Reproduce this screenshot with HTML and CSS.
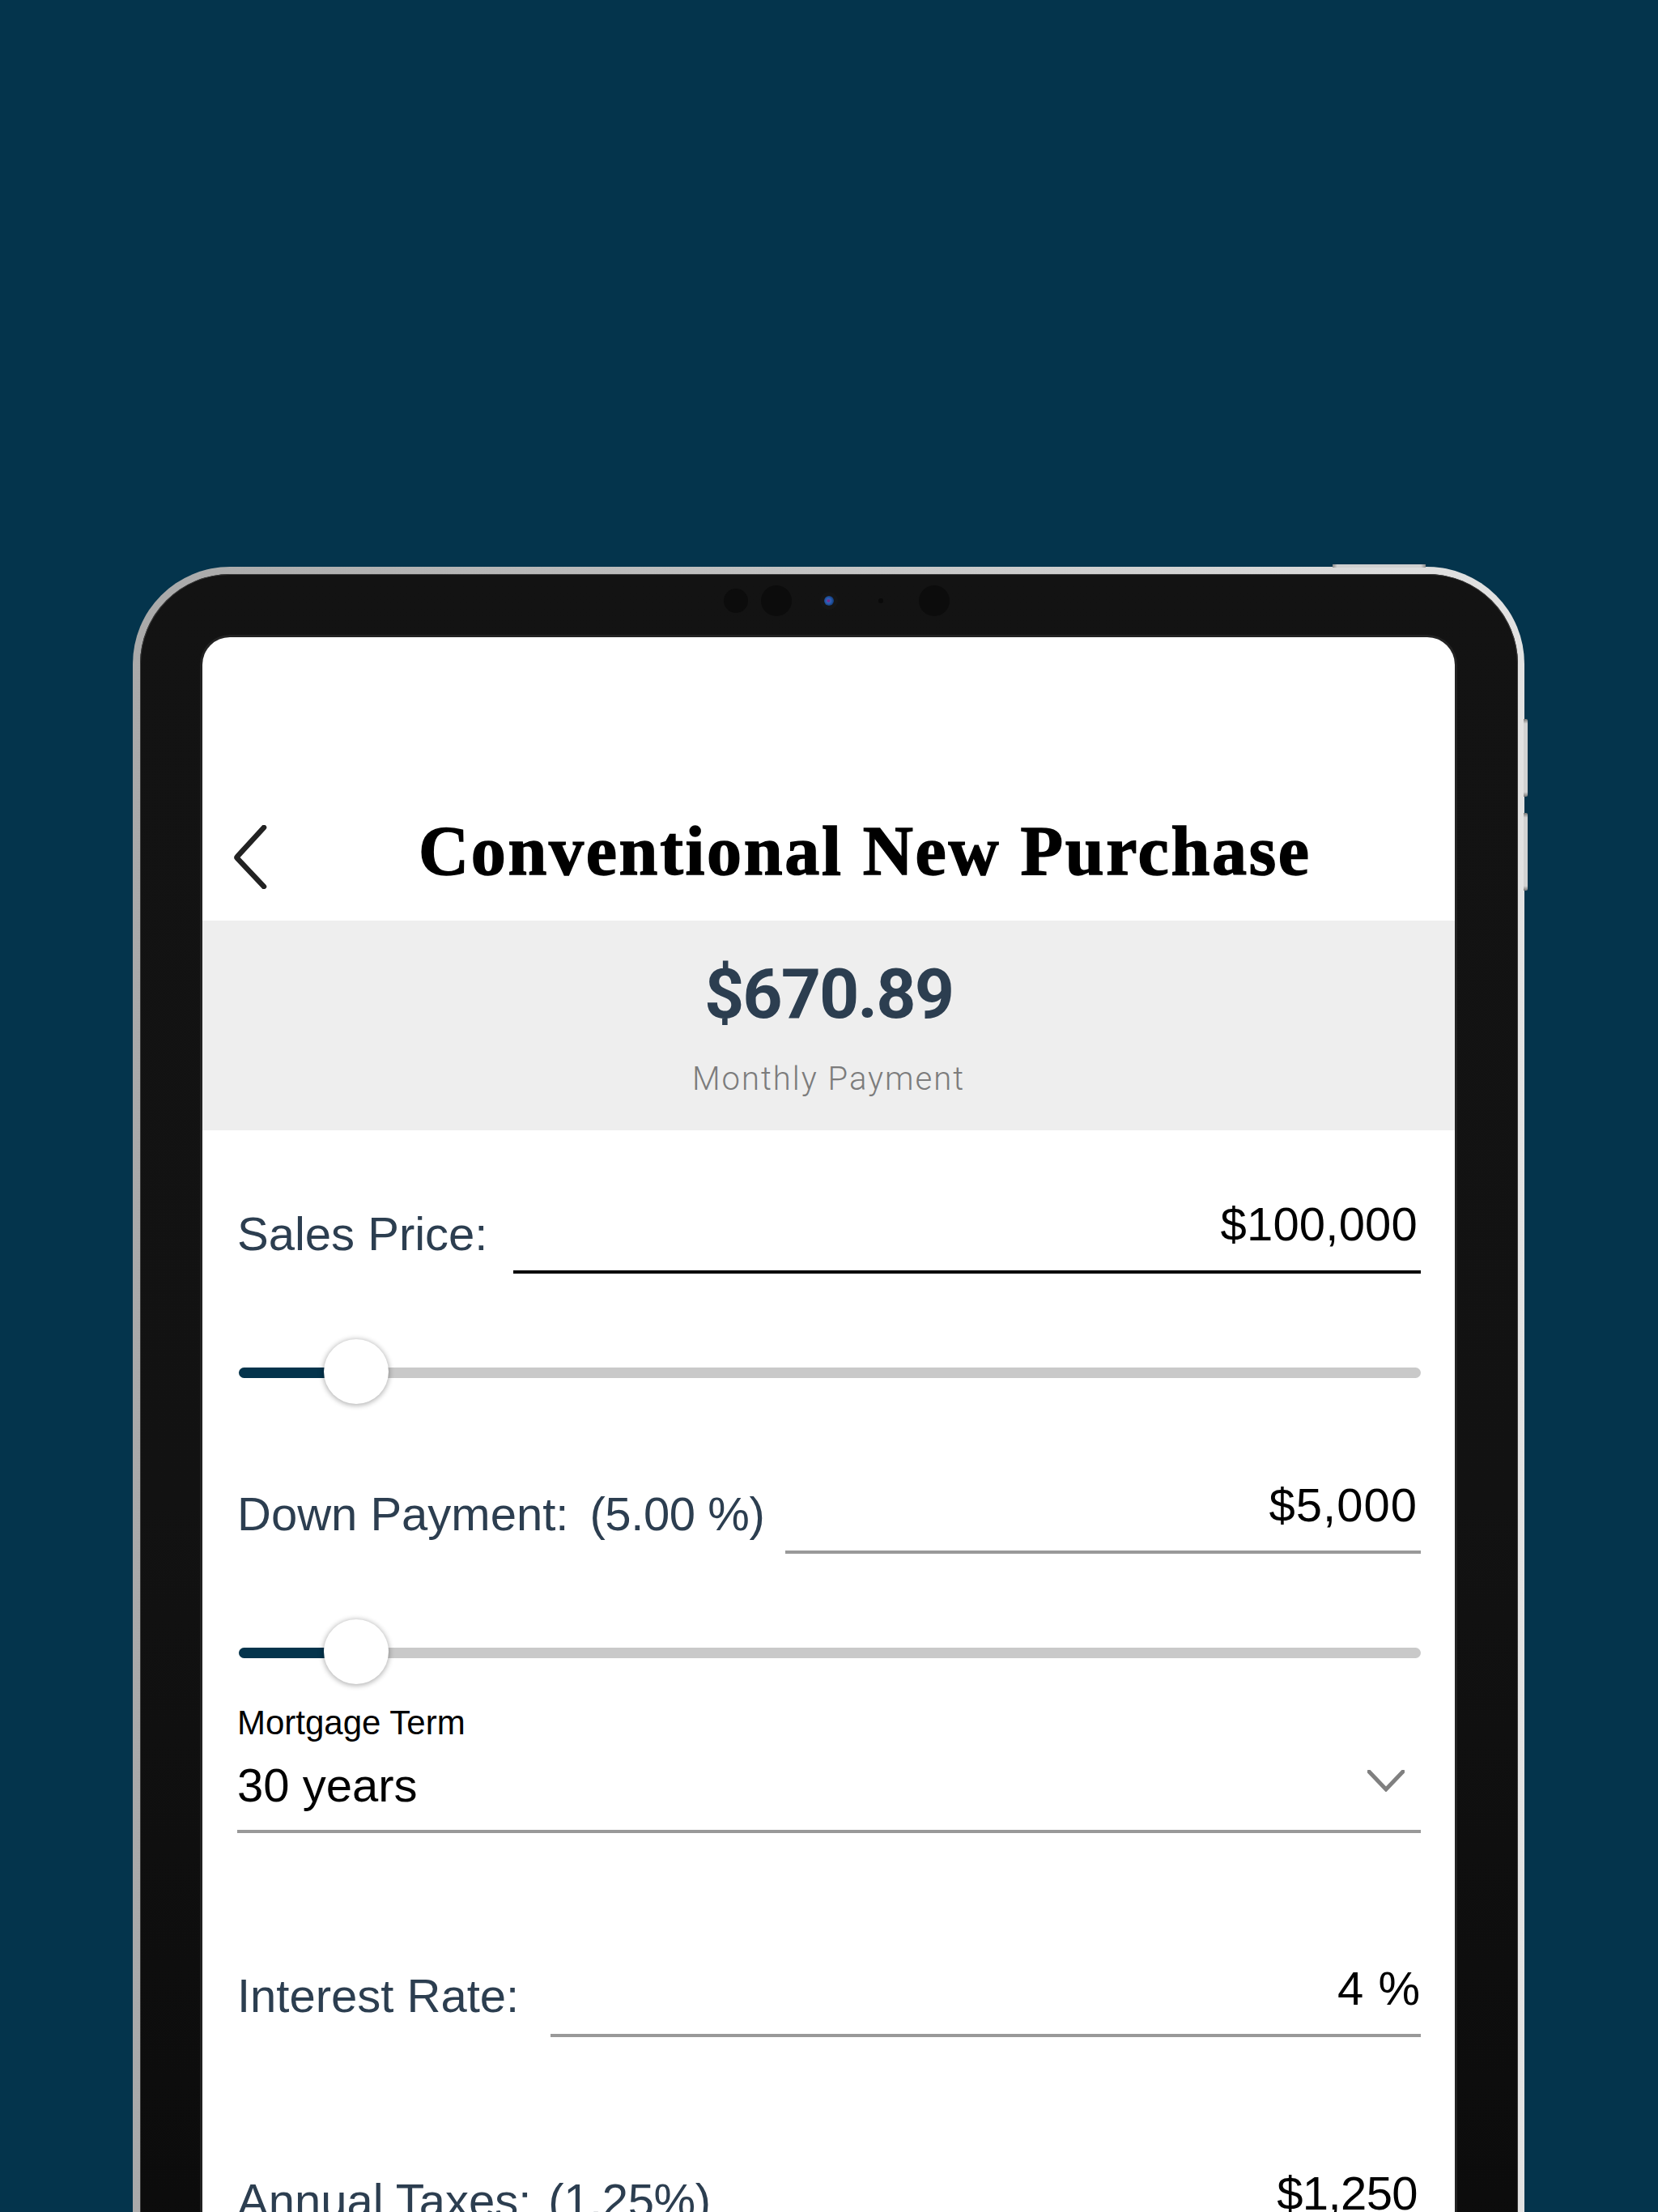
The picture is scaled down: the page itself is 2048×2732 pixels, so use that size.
FILE: index.html
```html
<!DOCTYPE html>
<html lang="en">
<head>
<meta charset="utf-8">
<title>Conventional New Purchase</title>
<link rel="stylesheet" href="styles.css">
</head>
<body>
<main class="stage">
  <div class="device">
    <span class="hw hw-top"></span>
    <span class="hw hw-side hw-side-a"></span>
    <span class="hw hw-side hw-side-b"></span>
    <div class="bezel">
      <div class="cams">
        <span class="cam cam-a"></span>
        <span class="cam cam-b"></span>
        <span class="cam cam-lens"></span>
        <span class="cam cam-dot"></span>
        <span class="cam cam-b"></span>
      </div>
      <div class="screen">
        <header class="topbar">
          <svg class="back" viewBox="0 0 42 79" aria-hidden="true"><path d="M38 3 L5 39 Q4 40 5 41 L38 76"/></svg>
          <h1 class="title">Conventional New Purchase</h1>
        </header>
        <section class="summary">
          <div class="amount">$670.89</div>
          <div class="caption">Monthly Payment</div>
        </section>
        <section class="form">
          <div class="field field-sales">
            <label class="label">Sales Price:</label>
            <div class="input input-active">$100,000</div>
          </div>
          <div class="slider slider-first"><div class="fill"></div><div class="thumb"></div></div>
          <div class="field field-down">
            <label class="label">Down Payment:</label>
            <span class="label note">(5.00 %)</span>
            <div class="input">$5,000</div>
          </div>
          <div class="slider slider-second"><div class="fill"></div><div class="thumb"></div></div>
          <div class="select-label">Mortgage Term</div>
          <div class="select">
            <span>30 years</span>
            <svg class="chev" viewBox="0 0 46 27" aria-hidden="true"><path d="M2 2 L23 24 L44 2"/></svg>
          </div>
          <div class="field field-rate">
            <label class="label">Interest Rate:</label>
            <div class="input input-rate">4&nbsp;%</div>
          </div>
          <div class="field field-tax">
            <label class="label">Annual Taxes:</label>
            <span class="label note">(1.25%)</span>
            <div class="input">$1,250</div>
          </div>
        </section>
      </div>
    </div>
  </div>
</main>
</body>
</html>
```
FILE: styles.css
```css
html, body { margin: 0; padding: 0; }
body { background: #04344c; }
.stage {
  width: 2048px;
  height: 2732px;
  overflow: hidden;
  box-sizing: border-box;
  padding: 700px 0 0 164px;
  background: #04344c;
  font-family: "Liberation Sans", Arial, sans-serif;
}
.device {
  position: relative;
  width: 1719px;
  height: 2300px;
  box-sizing: border-box;
  padding: 9px 8px 0 9px;
  border-radius: 120px 120px 0 0;
  background: linear-gradient(90deg, #a9a9a9 0%, #c4c4c4 50%, #e2e2e2 100%);
}
.hw { position: absolute; background: #c9c9c9; }
.hw-top { left: 1482px; top: -3px; width: 115px; height: 4px; background: linear-gradient(90deg, #8a8a8a, #d0d0d0 5%, #d0d0d0 95%, #8a8a8a); }
.hw-side { left: 1718px; width: 5px; background: linear-gradient(180deg, #777, #d2d2d2 6%, #d2d2d2 94%, #777); border-radius: 0 2px 2px 0; }
.hw-side-a { top: 188px; height: 96px; }
.hw-side-b { top: 304px; height: 96px; }
.bezel {
  position: relative;
  height: 2291px;
  box-sizing: border-box;
  padding: 78px 78px 0 77px;
  border-radius: 111px 111px 0 0;
  background: linear-gradient(180deg, #131313 0%, #121212 50%, #0a0a0a 100%);
  box-shadow: inset 0 0 0 1px #3a3a3a;
}
.cams {
  position: absolute;
  left: 721px;
  top: 33px;
  width: 300px;
  height: 0;
}
.cam { position: absolute; border-radius: 50%; background: #0c0c0c; }
.cam-a { left: 0; top: -15px; width: 30px; height: 30px; }
.cam-b { left: 46px; top: -19px; width: 38px; height: 38px; }
.cam-b:last-child { left: 241px; }
.cam-lens { left: 124px; top: -6px; width: 12px; height: 12px; background: radial-gradient(circle at 45% 50%, #7a2a8a 0 12%, #2c62b8 30%, #123a78 75%, #1a1a1a 100%); box-shadow: 0 0 0 5px #161616; }
.cam-dot { left: 191px; top: -3px; width: 6px; height: 6px; background: #0a0a0a; }
.screen {
  height: 2200px;
  background: #fff;
  border-radius: 34px 34px 0 0;
  box-shadow: 0 0 0 3px #222;
  overflow: hidden;
}
.topbar {
  height: 350px;
  box-sizing: border-box;
  display: flex;
  align-items: flex-end;
  padding: 0 0 36px 38px;
}
.back {
  width: 42px;
  height: 79px;
  margin-bottom: 3px;
  flex: none;
}
.back path { fill: none; stroke: #222; stroke-width: 6.5; stroke-linecap: round; stroke-linejoin: round; }
.title {
  margin: 0 0 0 187px;
  font-family: "Liberation Serif", "Times New Roman", serif;
  font-weight: 700;
  font-size: 86px;
  line-height: 100px;
  letter-spacing: 2.7px;
  color: #000;
  white-space: nowrap;
  -webkit-text-stroke: 1.5px #000;
}
.summary {
  height: 259px;
  background: #eeeeee;
  display: flex;
  flex-direction: column;
  align-items: center;
}
.amount {
  margin-top: 41px;
  font-family: Roboto, sans-serif;
  font-weight: 700;
  font-size: 86px;
  line-height: 100px;
  letter-spacing: -2px;
  color: #2c3e50;
}
.caption {
  margin-top: 30px;
  font-family: Roboto, sans-serif;
  font-weight: 300;
  font-size: 40px;
  line-height: 50px;
  letter-spacing: 2px;
  color: #7c7c7c;
}
.form { padding: 83px 42px 0 43px; }
.field { display: flex; align-items: flex-end; }
.label {
  font-size: 58px;
  line-height: 66px;
  color: #2c3e50;
  margin-bottom: 16px;
  white-space: nowrap;
}
.note { margin-left: 26px; letter-spacing: -.4px; }
.input {
  flex: 1;
  box-sizing: border-box;
  margin-left: 26px;
  padding: 0 4px 23px 0;
  border-bottom: 4px solid #999;
  text-align: right;
  font-size: 58px;
  line-height: 66px;
  color: #000;
}
.input-active { border-bottom-color: #000; padding-bottom: 24px; letter-spacing: .2px; }
.input-rate { padding-right: 1px; word-spacing: 2px; }
.field-sales .input { margin-left: 32px; }
.field-rate .input { margin-left: 39px; }
.field-down { margin-top: 124px; }
.field-down .label { margin-bottom: 16px; }
.field-down .input { letter-spacing: 1px; }
.field-rate { margin-top: 159px; }
.field-rate .label { margin-bottom: 18px; }
.field-tax { margin-top: 160px; }
.field-tax .label { margin-bottom: 18px; }
.field-tax .note { margin-left: 21px; }
.field-tax .input { letter-spacing: -.6px; }
.slider {
  position: relative;
  height: 13px;
  margin-left: 2px;
  border-radius: 7px;
  background: #c9c9c9;
}
.slider-first { margin-top: 116px; }
.slider-second { margin-top: 116px; }
.fill { width: 120px; height: 100%; border-radius: 7px 0 0 7px; background: #04344c; }
.thumb {
  position: absolute;
  left: 105px;
  top: -35px;
  width: 80px;
  height: 80px;
  border-radius: 50%;
  background: #fff;
  box-shadow: 0 1px 6px 1px rgba(0,0,0,.3);
}
.select-label {
  margin-top: 57px;
  font-size: 42px;
  line-height: 46px;
  color: #000;
}
.select {
  margin-top: 21px;
  padding-bottom: 22px;
  border-bottom: 4px solid #999;
  display: flex;
  justify-content: space-between;
  align-items: flex-start;
  font-size: 58px;
  line-height: 66px;
  color: #000;
}
.chev { width: 46px; height: 27px; margin: 14px 20px 0 0; }
.chev path { fill: none; stroke: #808080; stroke-width: 5; stroke-linecap: round; }
```
